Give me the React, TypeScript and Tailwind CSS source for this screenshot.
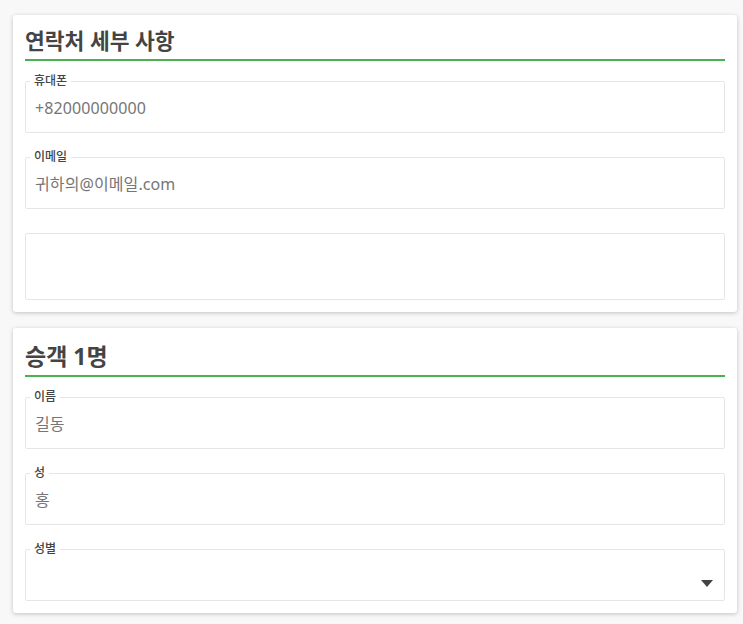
import type { ReactNode } from 'react';

function Field({ label, value, select }: { label?: string; value?: string; select?: boolean }) {
  return (
    <fieldset className="border border-[#e6e6e6] rounded-[2px] px-[4px] m-0 min-w-0">
      {label ? (
        <legend className="px-1 text-[12px] leading-[16px] font-medium text-[#444]">{label}</legend>
      ) : null}
      <div className="h-[38px] mb-[5px] flex items-center justify-between pl-[5px] pr-[7px] text-[16px] tracking-[0.1px] text-[#767676]">
        <span>{value}</span>
        {select ? (
          <svg width="12" height="7" viewBox="0 0 12 7" className="mt-[14px]">
            <path d="M0 0h12L6 7z" fill="#444" />
          </svg>
        ) : null}
      </div>
    </fieldset>
  );
}

function Card({ title, titleClass, children }: { title: ReactNode; titleClass: string; children: ReactNode }) {
  return (
    <section className="w-[724px] ml-[13px] bg-white rounded-[3px] shadow-[0_1px_4px_rgba(0,0,0,0.22)] px-3 pb-3">
      <h2 className={`${titleClass} leading-[28px] font-bold text-[#444] border-b-2 border-[#4caf50]`}>
        {title}
      </h2>
      {children}
    </section>
  );
}

export default function App() {
  return (
    <div
      className="min-h-[624px] bg-[#f8f8f8] pt-[15px] pb-4"
      style={{ fontFamily: '"Noto Sans", "Noto Sans CJK KR", sans-serif' }}
    >
      {/* 연락처 */}
      <Card title="연락처 세부 사항" titleClass="pt-3 pb-1 text-[21.5px]">
        <div className="mt-3 flex flex-col gap-4">
          <Field label="휴대폰" value="+82000000000" />
          <Field label="이메일" value="귀하의@이메일.com" />
        </div>
        <div className="mt-6 h-[67px] border border-[#e6e6e6] rounded-[2px]" />
      </Card>

      {/* 승객 */}
      <div className="mt-4">
        <Card title="승객 1명" titleClass="pt-[14px] pb-[5px] text-[23px]">
          <div className="mt-3 flex flex-col gap-4">
            <Field label="이름" value="길동" />
            <Field label="성" value="홍" />
            <Field label="성별" select />
          </div>
        </Card>
      </div>
    </div>
  );
}
